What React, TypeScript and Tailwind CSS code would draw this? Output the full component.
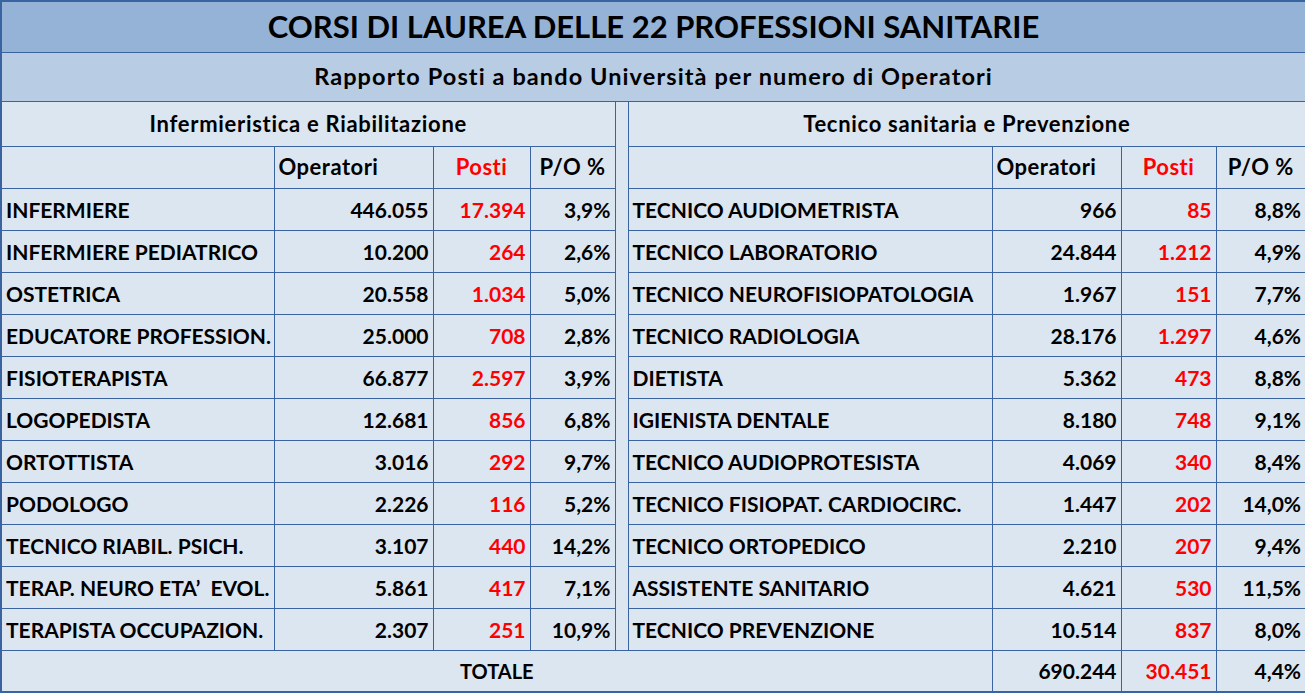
import * as React from "react";

type Row = [string, string, string, string];

const left: Row[] = [
  ["INFERMIERE", "446.055", "17.394", "3,9%"],
  ["INFERMIERE PEDIATRICO", "10.200", "264", "2,6%"],
  ["OSTETRICA", "20.558", "1.034", "5,0%"],
  ["EDUCATORE PROFESSION.", "25.000", "708", "2,8%"],
  ["FISIOTERAPISTA", "66.877", "2.597", "3,9%"],
  ["LOGOPEDISTA", "12.681", "856", "6,8%"],
  ["ORTOTTISTA", "3.016", "292", "9,7%"],
  ["PODOLOGO", "2.226", "116", "5,2%"],
  ["TECNICO RIABIL. PSICH.", "3.107", "440", "14,2%"],
  ["TERAP. NEURO ETA’  EVOL.", "5.861", "417", "7,1%"],
  ["TERAPISTA OCCUPAZION.", "2.307", "251", "10,9%"],
];

const right: Row[] = [
  ["TECNICO AUDIOMETRISTA", "966", "85", "8,8%"],
  ["TECNICO LABORATORIO", "24.844", "1.212", "4,9%"],
  ["TECNICO NEUROFISIOPATOLOGIA", "1.967", "151", "7,7%"],
  ["TECNICO RADIOLOGIA", "28.176", "1.297", "4,6%"],
  ["DIETISTA", "5.362", "473", "8,8%"],
  ["IGIENISTA DENTALE", "8.180", "748", "9,1%"],
  ["TECNICO AUDIOPROTESISTA", "4.069", "340", "8,4%"],
  ["TECNICO FISIOPAT. CARDIOCIRC.", "1.447", "202", "14,0%"],
  ["TECNICO ORTOPEDICO", "2.210", "207", "9,4%"],
  ["ASSISTENTE SANITARIO", "4.621", "530", "11,5%"],
  ["TECNICO PREVENZIONE", "10.514", "837", "8,0%"],
];

const cell = "border border-[#3a64a0] px-[4px] whitespace-pre";
// lowercase headings are wider in the original face
const head = "text-[22px] tracking-[0.5px]";

export default function App() {
  return (
    <div className="w-[1305px] h-[693px] bg-white font-['Lato','Liberation_Sans',sans-serif] font-bold text-black">
      <table className="w-[1305px] table-fixed border-collapse border-2 border-[#3a64a0] bg-[#dce6f1] text-[21px] leading-none">
        <colgroup>
          <col className="w-[273px]" />
          <col className="w-[159px]" />
          <col className="w-[97px]" />
          <col className="w-[85px]" />
          <col className="w-[13px]" />
          <col className="w-[364px]" />
          <col className="w-[129px]" />
          <col className="w-[95px]" />
          <col className="w-[90px]" />
        </colgroup>
        <tbody>
          {/* Title */}
          <tr className="h-[51px] bg-[#95b3d7]">
            <td colSpan={9} className={`${cell} text-center text-[31px]`}>
              CORSI DI LAUREA DELLE 22 PROFESSIONI SANITARIE
            </td>
          </tr>
          <tr className="h-[49px] bg-[#b8cce4]">
            <td colSpan={9} className={`${cell} text-center text-[23.5px] tracking-[1.1px]`}>
              Rapporto Posti a bando Università per numero di Operatori
            </td>
          </tr>

          {/* Section headings */}
          <tr className="h-[45px]">
            <td colSpan={4} className={`${cell} text-center text-[22px] tracking-[0.7px]`}>
              Infermieristica e Riabilitazione
            </td>
            <td rowSpan={13} className="border-x border-[#3a64a0]" />
            <td colSpan={4} className={`${cell} text-center text-[22px] tracking-[0.7px]`}>
              Tecnico sanitaria e Prevenzione
            </td>
          </tr>

          {/* Column headings */}
          <tr className="h-[42px]">
            <td className={cell} />
            <td className={`${cell} ${head} text-left`}>Operatori</td>
            <td className={`${cell} ${head} text-center text-[#ff0000]`}>Posti</td>
            <td className={`${cell} ${head} text-center`}>P/O %</td>
            <td className={cell} />
            <td className={`${cell} ${head} text-left`}>Operatori</td>
            <td className={`${cell} ${head} text-center text-[#ff0000]`}>Posti</td>
            <td className={`${cell} ${head} text-center`}>P/O %</td>
          </tr>

          {/* Data */}
          {left.map((l, i) => {
            const r = right[i];
            return (
              <tr key={l[0]} className="h-[42px]">
                <td className={`${cell} text-left`}>{l[0]}</td>
                <td className={`${cell} text-right`}>{l[1]}</td>
                <td className={`${cell} text-right text-[#ff0000]`}>{l[2]}</td>
                <td className={`${cell} text-right`}>{l[3]}</td>
                <td className={`${cell} text-left`}>{r[0]}</td>
                <td className={`${cell} text-right`}>{r[1]}</td>
                <td className={`${cell} text-right text-[#ff0000]`}>{r[2]}</td>
                <td className={`${cell} text-right`}>{r[3]}</td>
              </tr>
            );
          })}

          {/* Totals */}
          <tr className="h-[42px]">
            <td colSpan={6} className={`${cell} text-center text-[20px]`}>
              TOTALE
            </td>
            <td className={`${cell} text-right`}>690.244</td>
            <td className={`${cell} text-right text-[#ff0000]`}>30.451</td>
            <td className={`${cell} text-right`}>4,4%</td>
          </tr>
        </tbody>
      </table>
    </div>
  );
}
